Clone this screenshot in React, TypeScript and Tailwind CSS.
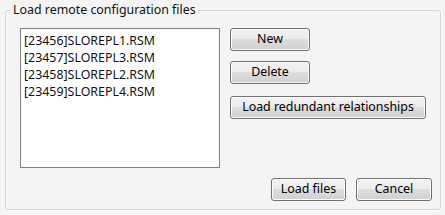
const files = ["[23456]SLOREPL1.RSM", "[23457]SLOREPL3.RSM", "[23458]SLOREPL2.RSM", "[23459]SLOREPL4.RSM"];

function Btn({ label, className }: { label: string; className: string }) {
  return (
    <button
      type="button"
      className={`flex h-[23px] items-center justify-center rounded-[3px] border border-[#707070] bg-[linear-gradient(#f2f2f2_0%,#ebebeb_50%,#dddddd_50%,#cfcfcf_100%)] text-[12.4px] text-black shadow-[inset_0_0_0_1px_#fcfcfc] ${className}`}
    >
      {label}
    </button>
  );
}

export default function App() {
  return (
    <div className="h-[215px] w-[445px] bg-[#f4f4f4] pt-[2px] pl-[5px] font-['Noto_Sans',sans-serif] text-[12.4px] text-[#111]">
      <fieldset className="h-[208px] w-[436px] rounded-[3px] border border-[#d5d5d5] shadow-[1px_1px_0_#ffffff]">
        <legend className="ml-[5px] px-[2px] leading-[16px]">Load remote configuration files</legend>
        <div className="flex flex-col pt-[10px] pr-[8px] pl-[14px]">
          <div className="flex gap-[10px]">
            <ul className="h-[140px] w-[200px] border border-[#828282] bg-white px-[3px] pt-[3px]">
              {files.map((f) => (
                <li key={f} className="leading-[17px]">
                  {f}
                </li>
              ))}
            </ul>
            <div className="flex flex-col items-start">
              <Btn label="New" className="w-[80px]" />
              <Btn label="Delete" className="mt-[10px] w-[80px]" />
              <Btn label="Load redundant relationships" className="mt-[12px] w-[196px]" />
            </div>
          </div>
          <div className="mt-[10px] flex justify-end gap-[10px]">
            <Btn label="Load files" className="w-[75px]" />
            <Btn label="Cancel" className="w-[76px]" />
          </div>
        </div>
      </fieldset>
    </div>
  );
}
